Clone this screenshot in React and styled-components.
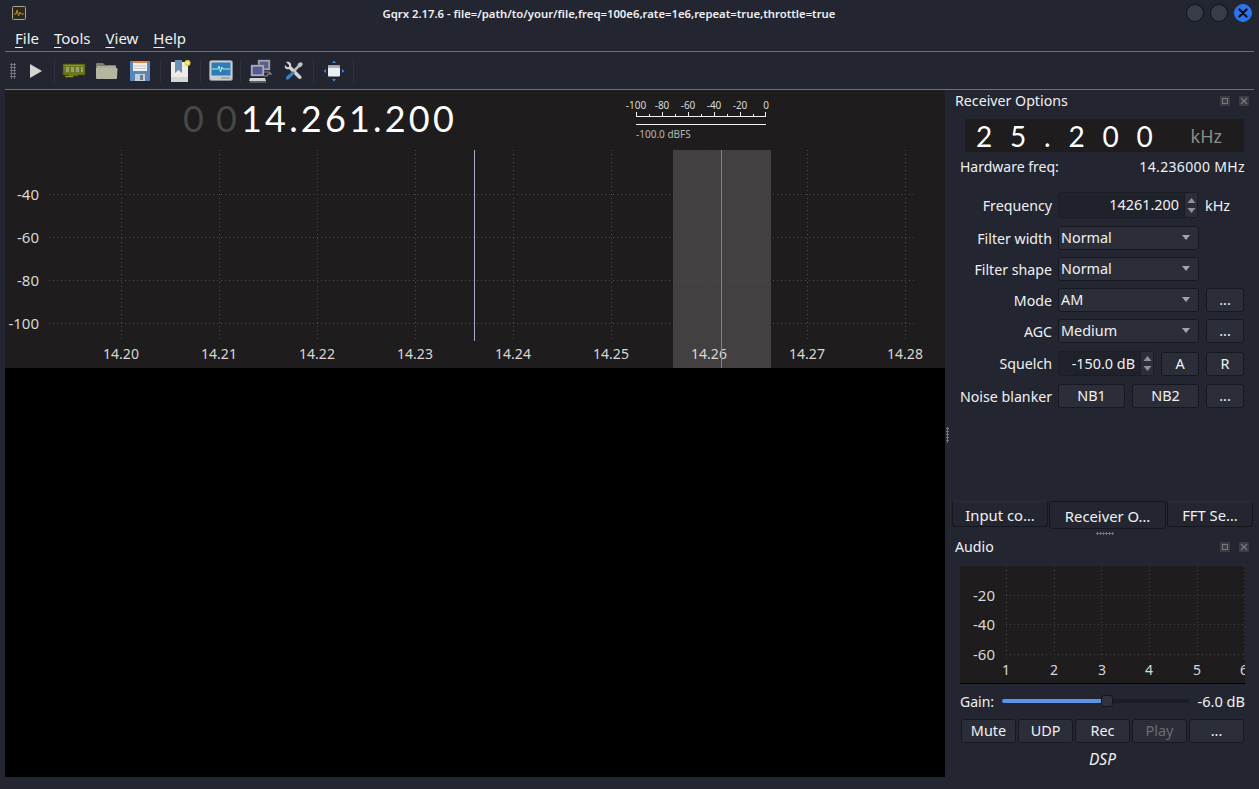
import React from "react";
import styled, { createGlobalStyle } from "styled-components";

const bandLeft = 668;
const bandWidth = 98;
const xTicks = ["14.20", "14.21", "14.22", "14.23", "14.24", "14.25", "14.26", "14.27", "14.28"];
const yTicks = [
  ["-40", 44],
  ["-60", 87],
  ["-80", 130],
  ["-100", 173],
];
const meterTicks = ["-100", "-80", "-60", "-40", "-20", "0"];

const App = () => {
  return (
    <Window>
      <GlobalStyle />
      <TitleBar>
        <AppIcon />
        <Title>Gqrx 2.17.6 - file=/path/to/your/file,freq=100e6,rate=1e6,repeat=true,throttle=true</Title>
        <WindowButtons>
          <RoundButton />
          <RoundButton />
          <RoundButton $close>
            <svg width="10" height="10" viewBox="0 0 10 10">
              <path d="M1.5 1.5l7 7M8.5 1.5l-7 7" stroke="#0b0d14" strokeWidth="2.2" strokeLinecap="round" />
            </svg>
          </RoundButton>
        </WindowButtons>
      </TitleBar>
      <MenuBar>
        <MenuItem><u>F</u>ile</MenuItem>
        <MenuItem><u>T</u>ools</MenuItem>
        <MenuItem><u>V</u>iew</MenuItem>
        <MenuItem><u>H</u>elp</MenuItem>
      </MenuBar>
      <ToolBar>
        <Grip />
        <ToolButton><PlayIcon /></ToolButton>
        <ToolSep $width={5} />
        <ToolButton><RamIcon /></ToolButton>
        <ToolButton><FolderIcon /></ToolButton>
        <ToolButton><FloppyIcon /></ToolButton>
        <ToolSep $width={8} />
        <ToolButton><BookmarkIcon /></ToolButton>
        <ToolSep />
        <ToolButton><MonitorIcon /></ToolButton>
        <ToolSep />
        <ToolButton><NetworkIcon /></ToolButton>
        <ToolButton><ToolsIcon /></ToolButton>
        <ToolSep />
        <ToolButton><FullscreenIcon /></ToolButton>
        <ToolSep />
      </ToolBar>
      <Body>
        <Left>
          <Plot>
            <PlotHead>
              <FreqReadout>
                <DimDigit>0</DimDigit>
                <DimDigit>0</DimDigit>
                <MainDigits>14.261.200</MainDigits>
              </FreqReadout>
              <Meter>
                <MeterLabels>
                  {meterTicks.map((t) => (
                    <span key={t}>{t}</span>
                  ))}
                </MeterLabels>
                <svg width="130" height="16" viewBox="0 0 130 16">
                  <path
                    d="M.5 0v5M13.5 2v3M26.5 0v5M39.5 2v3M52.5 0v5M65.5 2v3M78.5 0v5M91.5 2v3M104.5 0v5M117.5 2v3M129.5 0v5M0 4.5h130M0 12.5h130"
                    stroke="#f2f2f2"
                    fill="none"
                  />
                </svg>
                <MeterValue>-100.0 dBFS</MeterValue>
              </Meter>
            </PlotHead>
            <PlotChart>
              <Band />
              <svg width="940" height="218" viewBox="0 0 940 218">
                {xTicks.map((t, i) => (
                  <path key={t} d={`M${116.5 + 98 * i} 0V191`} stroke="#4c4a4a" strokeDasharray="1 3" />
                ))}
                {yTicks.map(([t, y]) => (
                  <path key={t} d={`M44 ${y + 0.5}H912`} stroke="#4c4a4a" strokeDasharray="1 3" />
                ))}
                <path d="M469.5 0V191" stroke="#a4aac8" />
              </svg>
              {yTicks.map(([t, y]) => (
                <YLabel key={t} style={{ top: y - 10 }}>{t}</YLabel>
              ))}
              {xTicks.map((t, i) => (
                <XLabel key={t} style={{ left: 116 + 98 * i }}>{t}</XLabel>
              ))}
              <CenterLine />
            </PlotChart>
          </Plot>
          <Waterfall />
        </Left>
        <Splitter />
        <Right>
          <ReceiverDock>
            <DockHead>
              <DockTitle>Receiver Options</DockTitle>
              <DockIcon><FloatGlyph /></DockIcon>
              <DockIcon><CloseGlyph /></DockIcon>
            </DockHead>
            <OffsetDisplay>
              <OffsetDigits>2 5 . 2 0 0</OffsetDigits>
              <OffsetUnit>kHz</OffsetUnit>
            </OffsetDisplay>
            <HardwareRow>
              <span>Hardware freq:</span>
              <NumberText>14.236000 MHz</NumberText>
            </HardwareRow>
            <Form>
              <Row $height={26}>
                <RowLabel>Frequency</RowLabel>
                <Spin $width={140}>
                  <SpinValue>14261.200</SpinValue>
                  <SpinArrows><UpArrow /><DownArrow /></SpinArrows>
                </Spin>
                <Unit>kHz</Unit>
              </Row>
              <Row>
                <RowLabel>Filter width</RowLabel>
                <Select>Normal<Caret /></Select>
              </Row>
              <Row>
                <RowLabel>Filter shape</RowLabel>
                <Select>Normal<Caret /></Select>
              </Row>
              <Row>
                <RowLabel>Mode</RowLabel>
                <Select>AM<Caret /></Select>
                <Btn $width={38}>...</Btn>
              </Row>
              <Row>
                <RowLabel>AGC</RowLabel>
                <Select>Medium<Caret /></Select>
                <Btn $width={38}>...</Btn>
              </Row>
              <Row $height={25}>
                <RowLabel>Squelch</RowLabel>
                <Spin $width={96}>
                  <SpinValue>-150.0 dB</SpinValue>
                  <SpinArrows><UpArrow /><DownArrow /></SpinArrows>
                </Spin>
                <Btn $width={38}>A</Btn>
                <Btn $width={38}>R</Btn>
              </Row>
              <Row>
                <RowLabel>Noise blanker</RowLabel>
                <Btn $width={67}>NB1</Btn>
                <Btn $width={67}>NB2</Btn>
                <Btn $width={38}>...</Btn>
              </Row>
            </Form>
            <Tabs>
              <Tab $width={96}>Input co…</Tab>
              <Tab $width={117} $active>Receiver O…</Tab>
              <Tab $width={86}>FFT Se…</Tab>
            </Tabs>
            <DockHandle />
          </ReceiverDock>
          <AudioDock>
            <DockHead>
              <DockTitle>Audio</DockTitle>
              <DockIcon><FloatGlyph /></DockIcon>
              <DockIcon><CloseGlyph /></DockIcon>
            </DockHead>
            <AudioChart>
              <svg width="285" height="118" viewBox="0 0 285 118">
                {[46, 94, 141, 189, 237, 284].map((x) => (
                  <path key={x} d={`M${x + 0.5} 0V95`} stroke="#444242" strokeDasharray="1 3" />
                ))}
                {[29, 58, 88].map((y) => (
                  <path key={y} d={`M46 ${y + 0.5}H285`} stroke="#444242" strokeDasharray="1 3" />
                ))}
              </svg>
              {[["-20", 29], ["-40", 58], ["-60", 88]].map(([t, y]) => (
                <AudioY key={t} style={{ top: y - 10 }}>{t}</AudioY>
              ))}
              {[46, 94, 142, 189, 237, 284].map((x, i) => (
                <AudioX key={x} style={{ left: x }}>{i + 1}</AudioX>
              ))}
            </AudioChart>
            <GainRow>
              <span>Gain:</span>
              <Slider>
                <SliderFill />
                <SliderThumb />
              </Slider>
              <GainValue>-6.0 dB</GainValue>
            </GainRow>
            <AudioButtons>
              <Btn $width={55}>Mute</Btn>
              <Btn $width={55}>UDP</Btn>
              <Btn $width={55}>Rec</Btn>
              <Btn $width={55} $disabled>Play</Btn>
              <Btn $width={55}>...</Btn>
            </AudioButtons>
            <DspLabel>DSP</DspLabel>
          </AudioDock>
        </Right>
      </Body>
    </Window>
  );
};

const AppIcon = () => (
  <AppIconBox>
    <svg width="14" height="14" viewBox="0 0 14 14">
      <rect x=".5" y=".5" width="13" height="13" rx="1" fill="#2f2917" stroke="#a9a596" />
      <path d="M2 8h2l1-4 1.500 6L8 6l1 2h3" stroke="#b78a2a" fill="none" />
    </svg>
  </AppIconBox>
);

const PlayIcon = () => (
  <svg width="14" height="16" viewBox="0 0 14 16">
    <path d="M1 1l12 7-12 7z" fill="#d4d4d4" />
  </svg>
);

const RamIcon = () => (
  <svg width="24" height="16" viewBox="0 0 24 16">
    <path d="M1 1h22v11H16v1H7v-1H1z" fill="#6e7a16" stroke="#3f470c" strokeWidth=".6" />
    <rect x="4" y="4" width="3" height="5" fill="#9a9a80" />
    <rect x="9" y="4" width="3" height="5" fill="#9a9a80" />
    <rect x="14" y="4" width="3" height="5" fill="#9a9a80" />
    <rect x="19" y="4" width="2" height="5" fill="#9a9a80" />
    <path d="M3 2h18v1H3z" fill="#8a9620" />
    <path d="M3.500 13.500h8" stroke="#d6dc3a" strokeWidth="1.400" strokeDasharray="1.200 .8" />
  </svg>
);

const FolderIcon = () => (
  <svg width="23" height="20" viewBox="0 0 23 20">
    <path d="M1 3a1 1 0 011-1h6l2 2h10a1 1 0 011 1v3H1z" fill="#7d7e6e" />
    <path d="M1 7h20.500a1 1 0 011 1l-.5 9a1 1 0 01-1 1H2a1 1 0 01-1-1z" fill="#b5b6a0" />
    <path d="M2 6h19" stroke="#d8d8c8" />
  </svg>
);

const FloppyIcon = () => (
  <svg width="20" height="20" viewBox="0 0 20 20">
    <rect width="20" height="20" rx="1" fill="#5a86bf" />
    <rect x="3" y="0" width="14" height="2" fill="#e8843a" />
    <rect x="3" y="2" width="14" height="8" fill="#f0f0ee" />
    <path d="M4 5h12M4 7.500h12" stroke="#c9c9c9" />
    <rect x="5" y="13" width="10" height="7" fill="#c6ced6" />
    <rect x="10" y="14" width="3" height="5" fill="#6a7c90" />
  </svg>
);

const BookmarkIcon = () => (
  <svg width="22" height="24" viewBox="0 0 22 24">
    <rect x="1" y="3" width="17" height="20" fill="#ecece8" />
    <path d="M5 1h7v13l-3.500-3L5 14z" fill="#6d8fb4" />
    <path d="M1 18h17v5H1z" fill="#d7d7d2" />
    <circle cx="17.500" cy="4" r="3" fill="#e7d42e" />
    <circle cx="17.500" cy="4" r="1.400" fill="#fbf59a" />
  </svg>
);

const MonitorIcon = () => (
  <svg width="24" height="22" viewBox="0 0 24 22">
    <rect x=".5" y=".5" width="23" height="20" rx="2" fill="#c9ccd0" stroke="#858a90" />
    <rect x="2.500" y="2.500" width="19" height="13" fill="#2f7ab8" />
    <path d="M3 9h6l1-3 1.500 6L13 7l1 2h7" stroke="#b4f5cf" fill="none" />
    <path d="M12 18h9" stroke="#7d8288" />
  </svg>
);

const NetworkIcon = () => (
  <svg width="24" height="24" viewBox="0 0 24 24">
    <rect x="9" y="1" width="12" height="10" fill="#b4b8bf" stroke="#70747c" strokeWidth=".6" />
    <rect x="10.500" y="2.500" width="9" height="7" fill="#5c5f8e" />
    <rect x="2" y="6" width="13" height="11" fill="#c3c6cb" stroke="#70747c" strokeWidth=".6" />
    <rect x="3.500" y="7.500" width="10" height="8" fill="#565a94" />
    <path d="M1 19h15l1 3H0z" fill="#d2d3d5" />
    <path d="M15 13h5l2 2h-3l-1 2h-3" fill="none" stroke="#8c8e90" strokeWidth="1.200" />
    <path d="M1 23h16" stroke="#8f9194" />
  </svg>
);

const ToolsIcon = () => (
  <svg width="20" height="20" viewBox="0 0 20 20">
    <path d="M2 1l3 3v2H3L1 4c-1 3 1 5 4 4l9.500 9.500c1 1 3.500.5 3-1.500 0-.5-.5-1-1-1.500L7 5c1-3-2-5-5-4z" fill="#d3d4d5" />
    <path d="M17 1l2 2-2 3-2 .5L11 11l-2-2 4.500-4.500L14 2.500z" fill="#c0c2c4" />
    <path d="M9 10l2 2-6 6c-1 1-3 1-3-1 0-1 0-1 1-2z" fill="#3f7fc4" />
  </svg>
);

const FullscreenIcon = () => (
  <svg width="22" height="22" viewBox="0 0 22 22">
    <rect x="5" y="5.500" width="12" height="11" rx="1" fill="#eceef0" />
    <rect x="5" y="5.500" width="12" height="2.500" fill="#a9b4c0" />
    <path d="M11 .5l2 2.500H9zM11 21.500L9 19h4zM.5 11L3 9v4zM21.500 11L19 13V9z" fill="#3e88d4" />
  </svg>
);

const FloatGlyph = () => (
  <svg width="8" height="8" viewBox="0 0 8 8">
    <rect x="1.500" y="1.500" width="5" height="5" fill="none" stroke="#75787d" />
  </svg>
);

const CloseGlyph = () => (
  <svg width="8" height="8" viewBox="0 0 8 8">
    <path d="M1 1l6 6M7 1L1 7" stroke="#75787d" strokeWidth="1.200" />
  </svg>
);

const UpArrow = () => (
  <svg width="9" height="6" viewBox="0 0 9 6">
    <path d="M4.500 0l4 5H.5z" fill="#8f9196" />
  </svg>
);

const DownArrow = () => (
  <svg width="9" height="6" viewBox="0 0 9 6">
    <path d="M4.500 6l4-5H.5z" fill="#8f9196" />
  </svg>
);

const GlobalStyle = createGlobalStyle`
  html, body {
    margin: 0;
    padding: 0;
    background: #232630;
  }
  * {
    box-sizing: border-box;
  }
`;

const Window = styled.div`
  width: 1259px;
  height: 789px;
  overflow: hidden;
  background: #232630;
  color: #f0f1f3;
  font-family: "Noto Sans", sans-serif;
  font-size: 14px;
  display: flex;
  flex-direction: column;
`;

const TitleBar = styled.div`
  height: 26px;
  display: flex;
  align-items: center;
  padding: 0 7px 0 12px;
`;

const AppIconBox = styled.div`
  width: 14px;
  height: 14px;
  display: flex;
`;

const Title = styled.div`
  flex: 1;
  text-align: center;
  padding-left: 6px;
  font-size: 11.3px;
  font-weight: 600;
  white-space: nowrap;
`;

const WindowButtons = styled.div`
  display: flex;
  gap: 6px;
`;

const RoundButton = styled.div`
  width: 18px;
  height: 18px;
  border-radius: 50%;
  display: flex;
  align-items: center;
  justify-content: center;
  background: ${(p) => (p.$close ? "#2a74f0" : "#383c4a")};
  border: 1px solid ${(p) => (p.$close ? "#2a74f0" : "#101218")};
`;

const MenuBar = styled.div`
  height: 26px;
  margin: 0 5px;
  display: flex;
  gap: 15px;
  align-items: center;
  padding: 0 0 2px 10px;
  border-bottom: 1px solid #6d6f76;
  font-size: 15px;
`;

const MenuItem = styled.span`
  u {
    text-underline-offset: 3px;
  }
`;

const ToolBar = styled.div`
  height: 38px;
  margin: 0 5px;
  display: flex;
  align-items: center;
  padding-left: 5px;
  border-bottom: 1px solid #6d6f76;
`;

const Grip = styled.div`
  width: 6px;
  height: 16px;
  margin-right: 3px;
  background-image: radial-gradient(#70737a 1px, transparent 1.2px);
  background-size: 3px 3px;
`;

const ToolButton = styled.div`
  width: 33px;
  height: 32px;
  flex: none;
  display: flex;
  align-items: center;
  justify-content: center;
`;

const ToolSep = styled.div`
  width: ${(p) => p.$width || 7}px;
  height: 24px;
  flex: none;
  background: linear-gradient(#2e313a, #2e313a) center / 1px 100% no-repeat;
`;

const Body = styled.div`
  flex: 1;
  display: flex;
  padding-left: 5px;
  min-height: 0;
`;

const Left = styled.div`
  width: 940px;
  height: 687px;
  display: flex;
  flex-direction: column;
`;

const Plot = styled.div`
  height: 278px;
  background: #1e1c1c;
  display: flex;
  flex-direction: column;
`;

const PlotHead = styled.div`
  height: 60px;
  position: relative;
`;

const FreqReadout = styled.div`
  position: absolute;
  left: 178px;
  top: 4px;
  font-family: "Lato", sans-serif;
  font-size: 36px;
  line-height: 48px;
  letter-spacing: 3.2px;
  color: #fff;
  white-space: nowrap;
`;

const DimDigit = styled.span`
  display: inline-block;
  width: 33px;
  color: #474747;
`;

const MainDigits = styled.span`
  margin-left: -8px;
`;

const Meter = styled.div`
  position: absolute;
  left: 631px;
  top: 9px;
  width: 130px;
  line-height: 0;
`;

const MeterLabels = styled.div`
  display: grid;
  grid-template-columns: repeat(6, 26px);
  justify-items: center;
  margin-left: -13px;
  height: 13px;
  font-size: 10px;
  line-height: 13px;
  color: #d8d8d8;
`;

const MeterValue = styled.div`
  font-size: 10px;
  line-height: 13px;
  color: #b8b8b8;
`;

const PlotChart = styled.div`
  position: relative;
  height: 218px;
  svg {
    position: relative;
    display: block;
  }
`;

const Band = styled.div`
  position: absolute;
  left: ${bandLeft}px;
  top: 0;
  width: ${bandWidth}px;
  height: 218px;
  background: #424040;
`;

const CenterLine = styled.div`
  position: absolute;
  left: 716px;
  top: 0;
  width: 1px;
  height: 218px;
  background: #d9605f;
`;

const YLabel = styled.span`
  position: absolute;
  right: 906px;
  font-size: 15px;
  line-height: 20px;
  color: #d8d8d8;
`;

const XLabel = styled.span`
  position: absolute;
  top: 194px;
  line-height: 20px;
  transform: translateX(-50%);
  color: #d8d8d8;
`;

const Waterfall = styled.div`
  flex: 1;
  background: #000;
`;

const Splitter = styled.div`
  width: 1px;
  position: relative;
  &::after {
    content: "";
    position: absolute;
    left: 1px;
    top: 337px;
    width: 3px;
    height: 16px;
    background-image: radial-gradient(#70737a 1px, transparent 1.2px);
    background-size: 3px 3px;
  }
`;

const Right = styled.div`
  width: 313px;
  display: flex;
  flex-direction: column;
`;

const ReceiverDock = styled.div`
  height: 445px;
  padding-left: 9px;
  display: flex;
  flex-direction: column;
`;

const AudioDock = styled.div`
  padding: 1px 0 0 9px;
  display: flex;
  flex-direction: column;
`;

const DockHead = styled.div`
  height: 22px;
  display: flex;
  align-items: center;
  padding-right: 10px;
  gap: 9px;
  line-height: 20px;
`;

const DockTitle = styled.div`
  flex: 1;
  font-size: 14.2px;
`;

const DockIcon = styled.div`
  width: 10px;
  height: 10px;
  display: flex;
  align-items: center;
  justify-content: center;
  background: #3a3c42;
`;

const OffsetDisplay = styled.div`
  margin: 7px 0 0 10px;
  width: 279px;
  height: 33px;
  background: #1e1c1c;
  display: flex;
  align-items: center;
  justify-content: space-between;
  padding: 0 22px 0 11px;
`;

const OffsetDigits = styled.span`
  font-family: "Lato", sans-serif;
  font-size: 28px;
  letter-spacing: 5.3px;
  color: #fff;
  white-space: pre;
`;

const OffsetUnit = styled.span`
  font-size: 18px;
  color: #8d8d8d;
`;

const HardwareRow = styled.div`
  margin: 5px 14px 0 5px;
  height: 20px;
  display: flex;
  justify-content: space-between;
  line-height: 20px;
`;

const NumberText = styled.span`
  letter-spacing: 0.35px;
`;

const Form = styled.div`
  margin: 14px 0 0 5px;
  display: flex;
  flex-direction: column;
  gap: 7px;
`;

const Row = styled.div`
  display: flex;
  align-items: center;
  gap: 7px;
  height: ${(p) => p.$height || 24}px;
  margin: ${(p) => (p.$height ? "1px 0" : "0")};
  font-size: 14.4px;
`;

const RowLabel = styled.span`
  width: 92px;
  margin-right: -1px;
  text-align: right;
  white-space: nowrap;
  font-size: 14.2px;
`;

const Spin = styled.div`
  width: ${(p) => p.$width}px;
  height: 100%;
  display: flex;
  background: #1f222b;
  border: 1px solid #1a1c24;
  border-radius: 3px;
`;

const SpinValue = styled.div`
  flex: 1;
  text-align: right;
  line-height: 24px;
  padding-right: 5px;
  white-space: nowrap;
`;

const SpinArrows = styled.div`
  width: 13px;
  flex: none;
  background: #2b2e38;
  border-left: 1px solid #191b22;
  display: flex;
  flex-direction: column;
  align-items: center;
  justify-content: center;
  gap: 3px;
`;

const Unit = styled.span``;

const Select = styled.div`
  width: 141px;
  height: 24px;
  line-height: 22px;
  padding-left: 2px;
  position: relative;
  background: #2b2e38;
  border: 1px solid #16181f;
  border-radius: 3px;
`;

const Caret = styled.span`
  position: absolute;
  right: 3px;
  top: 8px;
  width: 0;
  height: 0;
  margin-right: 5px;
  border-left: 4px solid transparent;
  border-right: 4px solid transparent;
  border-top: 5px solid #a2a4a8;
`;

const Btn = styled.div`
  width: ${(p) => p.$width}px;
  height: 24px;
  line-height: 22px;
  text-align: center;
  background: #2b2e38;
  border: 1px solid #16181f;
  border-radius: 3px;
  font-size: 14.4px;
  color: ${(p) => (p.$disabled ? "#6a6c72" : "#f0f1f3")};
`;

const Tabs = styled.div`
  margin: auto 0 0 -3px;
  display: flex;
  gap: 1px;
  align-items: flex-start;
  font-size: 14.8px;
`;

const Tab = styled.div`
  width: ${(p) => p.$width}px;
  height: ${(p) => (p.$active ? 28 : 26)}px;
  line-height: ${(p) => (p.$active ? 29 : 26)}px;
  text-align: center;
  white-space: nowrap;
  border: 1px solid #15171d;
  border-top-color: ${(p) => (p.$active ? "#15171d" : "#2a2d36")};
  border-radius: 0 0 3px 3px;
`;

const DockHandle = styled.div`
  align-self: flex-start;
  margin: 3px 0 0 141px;
  width: 18px;
  height: 3px;
  background-image: radial-gradient(#70737a 1px, transparent 1.2px);
  background-size: 3px 3px;
`;

const AudioChart = styled.div`
  position: relative;
  margin: 8px 0 0 5px;
  width: 285px;
  height: 118px;
  background: #1e1c1c;
  border-bottom: 1px solid #000;
  overflow: hidden;
  svg {
    display: block;
  }
`;

const AudioY = styled.span`
  position: absolute;
  right: 250px;
  font-size: 15px;
  line-height: 20px;
  color: #d8d8d8;
`;

const AudioX = styled.span`
  position: absolute;
  top: 94px;
  line-height: 20px;
  transform: translateX(-50%);
  color: #d8d8d8;
`;

const GainRow = styled.div`
  margin: 7px 14px 0 5px;
  height: 20px;
  display: flex;
  align-items: center;
  gap: 8px;
`;

const Slider = styled.div`
  width: 188px;
  height: 4px;
  border-radius: 2px;
  background: #1b1d25;
  position: relative;
`;

const SliderFill = styled.div`
  width: 105px;
  height: 4px;
  border-radius: 2px;
  background: #5b93e6;
`;

const SliderThumb = styled.div`
  position: absolute;
  left: 99px;
  top: -4px;
  width: 12px;
  height: 12px;
  border-radius: 3px;
  background: #30333d;
  border: 1px solid #14161c;
`;

const GainValue = styled.span`
  margin-left: auto;
  font-size: 14.6px;
  white-space: nowrap;
`;

const AudioButtons = styled.div`
  margin: 8px 0 0 6px;
  display: flex;
  gap: 2px;
`;

const DspLabel = styled.div`
  margin-top: 6px;
  padding-left: 6px;
  width: 289px;
  text-align: center;
  font-style: italic;
  font-size: 15.5px;
  line-height: 20px;
`;

export default App;
